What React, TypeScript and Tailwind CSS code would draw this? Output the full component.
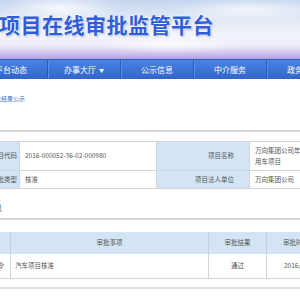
import React from "react";

const font = { fontFamily: '"Noto Sans CJK SC", "Noto Sans", sans-serif' };

export default function App() {
  return (
    <div className="w-[300px] h-[300px] overflow-hidden bg-white" style={font}>
      {/* Header */}
      <div className="h-[59px] relative overflow-hidden bg-[linear-gradient(180deg,#c6d6ef_0%,#dfe7f5_30%,#f3f5fb_60%,#eeeaf8_78%,#cfc4ef_90%,#b3a3e4_100%)]">
        <div className="absolute inset-0 bg-[radial-gradient(ellipse_60px_14px_at_60px_8px,rgba(255,255,255,0.8),transparent),radial-gradient(ellipse_80px_12px_at_250px_10px,rgba(255,255,255,0.7),transparent),radial-gradient(ellipse_70px_10px_at_170px_44px,rgba(255,255,255,0.7),transparent)]" />
        <div className="relative flex h-full items-start pt-[11px] ml-[-1px]">
          <span className="text-[21px] leading-[26px] font-bold tracking-[0.5px] text-[#2f5fd8] whitespace-nowrap [text-shadow:0_0_2px_#fff,0_0_3px_#fff,1px_1px_2px_rgba(60,80,160,0.5)]">
            项目在线审批监管平台
          </span>
        </div>
      </div>
      {/* Nav */}
      <div className="h-[20px] flex bg-[linear-gradient(180deg,#4a83e2,#3265cc)] border-t border-[#2e5cc0] overflow-hidden">
        <div className="flex ml-[-25px] shrink-0">
          {["平台动态", "办事大厅", "公示信息", "中介服务", "政务公开"].map((t, i) => (
            <div
              key={t}
              className="w-[73px] shrink-0 flex items-center justify-center text-[8px] text-white border-r border-[#2a58b8] shadow-[1px_0_0_#5a8fe6]"
            >
              {t}
              {i === 1 && <span className="ml-[3px] text-[5px]">▼</span>}
            </div>
          ))}
        </div>
      </div>
      {/* Breadcrumb */}
      <div className="h-[53px] pt-[16px] border-b-2 border-[#d8d8d8] overflow-hidden">
        <div className="ml-[-11px] text-[6px] leading-[8px] text-[#3a6cc8] whitespace-nowrap">审批结果公示</div>
      </div>
      {/* Table 1 */}
      <div className="mt-[9px] overflow-hidden">
        <div className="ml-[-73px] w-[450px] grid grid-cols-[93px_137px_93px_127px] border-t border-b border-[#cfd6de] text-[6.5px] text-[#555]">
          <div className="h-[29px] bg-[#d3e5f4] border-r border-b border-[#cfd6de] flex items-center justify-end pr-[2px]">项目代码</div>
          <div className="h-[29px] border-r border-b border-[#cfd6de] flex items-center pl-[5px]">2016-000052-36-02-000980</div>
          <div className="h-[29px] bg-[#d3e5f4] border-r border-b border-[#cfd6de] flex items-center justify-end pr-[15px]">项目名称</div>
          <div className="h-[29px] border-b border-[#cfd6de] flex flex-col justify-center pl-[5px] leading-[11px] whitespace-nowrap">
            <span>万向集团公司年产5万辆纯电动乘</span>
            <span>用车项目</span>
          </div>
          <div className="h-[17px] bg-[#d3e5f4] border-r border-[#cfd6de] flex items-center justify-end pr-[2px]">审批类型</div>
          <div className="h-[17px] border-r border-[#cfd6de] flex items-center pl-[5px]">核准</div>
          <div className="h-[17px] bg-[#d3e5f4] border-r border-[#cfd6de] flex items-center justify-end pr-[15px]">项目法人单位</div>
          <div className="h-[17px] flex items-center pl-[5px]">万向集团公司</div>
        </div>
      </div>
      {/* Section title */}
      <div className="mt-[8px] h-[23px] border-b-2 border-[#d6d6d6] overflow-hidden flex items-center">
        <div className="ml-[-30px] text-[8px] text-[#333] whitespace-nowrap">审批信息</div>
      </div>
      {/* Table 2 */}
      <div className="mt-[12px] overflow-hidden">
        <div className="ml-[-69px] w-[450px] grid grid-cols-[80px_198px_58px_114px] border-b border-[#cfd6de] text-[6.5px] text-[#555]">
          <div className="h-[22px] bg-[#d3e5f4] border-r border-[#bfd0de] flex items-center justify-center">审批文号</div>
          <div className="h-[22px] bg-[#d3e5f4] border-r border-[#bfd0de] flex items-center justify-center">审批事项</div>
          <div className="h-[22px] bg-[#d3e5f4] border-r border-[#bfd0de] flex items-center justify-center">审批结果</div>
          <div className="h-[22px] bg-[#d3e5f4] flex items-center pl-[16px]">审批时间</div>
          <div className="h-[24px] border-r border-[#cfd6de] flex items-center justify-end pr-[6px]">核准令</div>
          <div className="h-[24px] border-r border-[#cfd6de] flex items-center pl-[4px]">汽车项目核准</div>
          <div className="h-[24px] border-r border-[#cfd6de] flex items-center justify-center">通过</div>
          <div className="h-[24px] flex items-center pl-[17px]">2016/12/30</div>
        </div>
      </div>
      <div className="mt-[8px] border-t-2 border-[#e2e2e2]" />
    </div>
  );
}
